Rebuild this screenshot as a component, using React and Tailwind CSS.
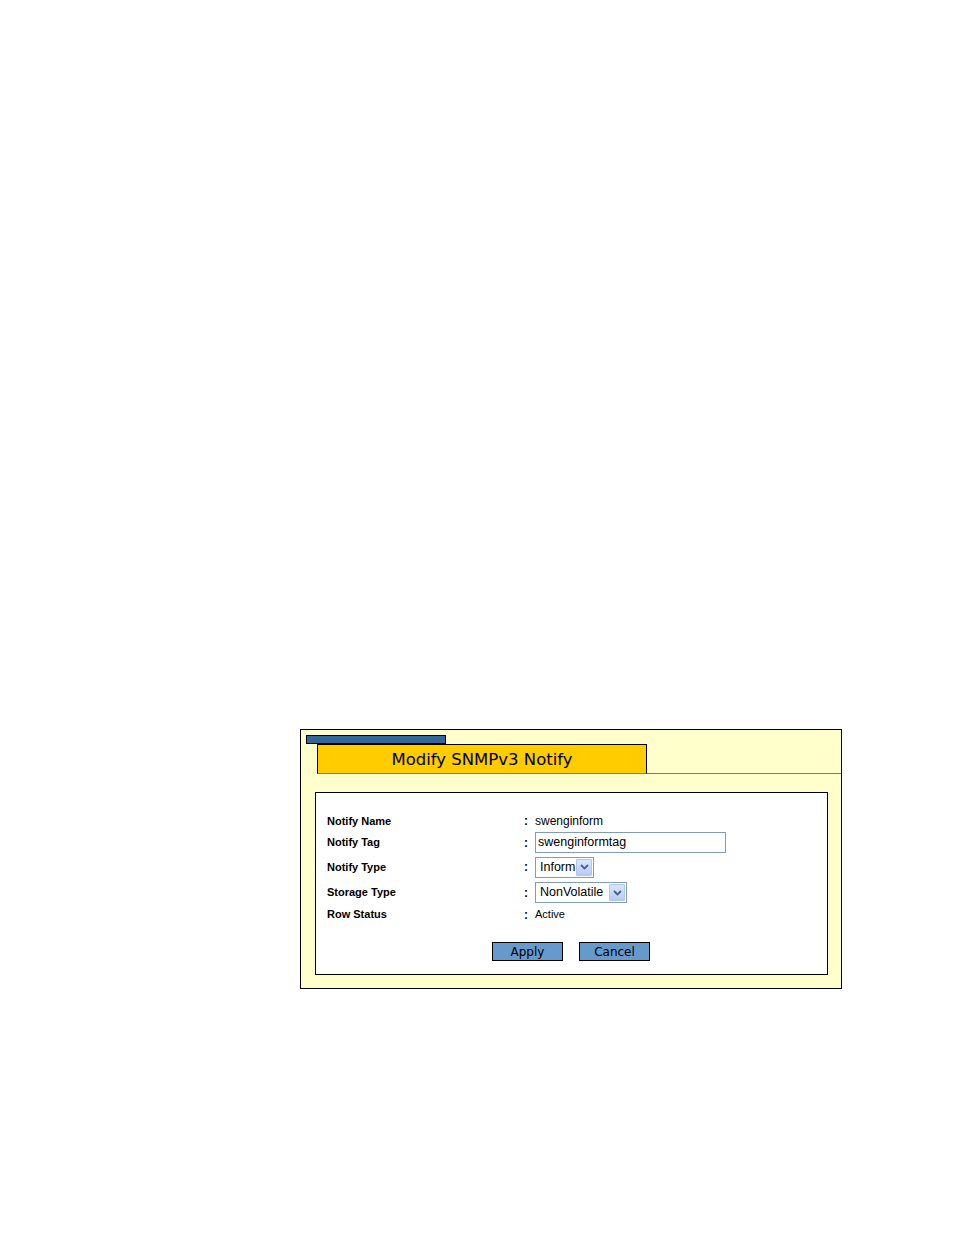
import React from "react";

function Arrow() {
  return (
    <div className="w-[16px] h-[17px] bg-gradient-to-b from-[#dbe6fd] to-[#b7cbf7] border border-[#b2c5ee] rounded-[1px] flex items-center justify-center">
      <svg width="9" height="6" viewBox="0 0 9 6">
        <path d="M1 1 L4.5 4.5 L8 1" fill="none" stroke="#4d6185" strokeWidth="1.8" />
      </svg>
    </div>
  );
}

function Row({ h, label, children }) {
  return (
    <div className={`flex items-center ${h}`}>
      <div className="w-[197px] text-[11px] font-bold text-black">{label}</div>
      <div className="w-[11px] text-[12px] font-bold text-black">:</div>
      <div className="flex items-center">{children}</div>
    </div>
  );
}

export default function App() {
  return (
    <div className="min-h-[1235px] bg-white pt-[729px] pl-[300px]" style={{ fontFamily: '"Liberation Sans", Arial, sans-serif' }}>
      <div className="w-[542px] h-[260px] border border-black bg-[#ffffcc]">
        <div className="mt-[5px] ml-[5px] w-[140px] h-[9px] border border-black bg-[#336699]" />
        <div className="flex h-[30px]">
          <div className="w-[16px]" />
          <div
            className="w-[330px] h-[30px] border-x border-t border-black border-b border-b-[#808060] bg-[#ffcc00] flex items-center justify-center pt-[2px] text-[16.5px] text-black"
            style={{ fontFamily: '"DejaVu Sans", Verdana, sans-serif' }}
          >
            Modify SNMPv3 Notify
          </div>
          <div className="flex-1 border-b border-[#808060]" />
        </div>
        <div className="mt-[18px] ml-[14px] w-[513px] h-[183px] border border-black bg-white pt-[18px] pl-[11px]">
          <Row h="h-[20px]" label="Notify Name">
            <span className="text-[12px] text-black">swenginform</span>
          </Row>
          <Row h="h-[23px]" label="Notify Tag">
            <div className="w-[191px] h-[21px] border border-[#7f9db9] bg-white flex items-center pl-[2px] text-[12.5px] text-black">
              swenginformtag
            </div>
          </Row>
          <Row h="h-[26px]" label="Notify Type">
            <div className="w-[59px] h-[21px] border border-[#7f9db9] bg-white flex items-center justify-between pl-[4px] pr-[1px] text-[12.5px] text-black">
              <span>Inform</span>
              <Arrow />
            </div>
          </Row>
          <Row h="h-[25px]" label="Storage Type">
            <div className="w-[92px] h-[21px] border border-[#7f9db9] bg-white flex items-center justify-between pl-[4px] pr-[1px] text-[12.5px] text-black">
              <span>NonVolatile</span>
              <Arrow />
            </div>
          </Row>
          <Row h="h-[19px]" label="Row Status">
            <span className="text-[11px] text-black">Active</span>
          </Row>
          <div className="mt-[18px] flex justify-center gap-[16px] pr-[12px]">
            <div
              className="w-[71px] h-[19px] border border-black bg-[#6699cc] flex items-center justify-center text-[12px] text-black"
              style={{ fontFamily: '"DejaVu Sans", Tahoma, sans-serif' }}
            >
              Apply
            </div>
            <div
              className="w-[71px] h-[19px] border border-black bg-[#6699cc] flex items-center justify-center text-[12px] text-black"
              style={{ fontFamily: '"DejaVu Sans", Tahoma, sans-serif' }}
            >
              Cancel
            </div>
          </div>
        </div>
      </div>
    </div>
  );
}
